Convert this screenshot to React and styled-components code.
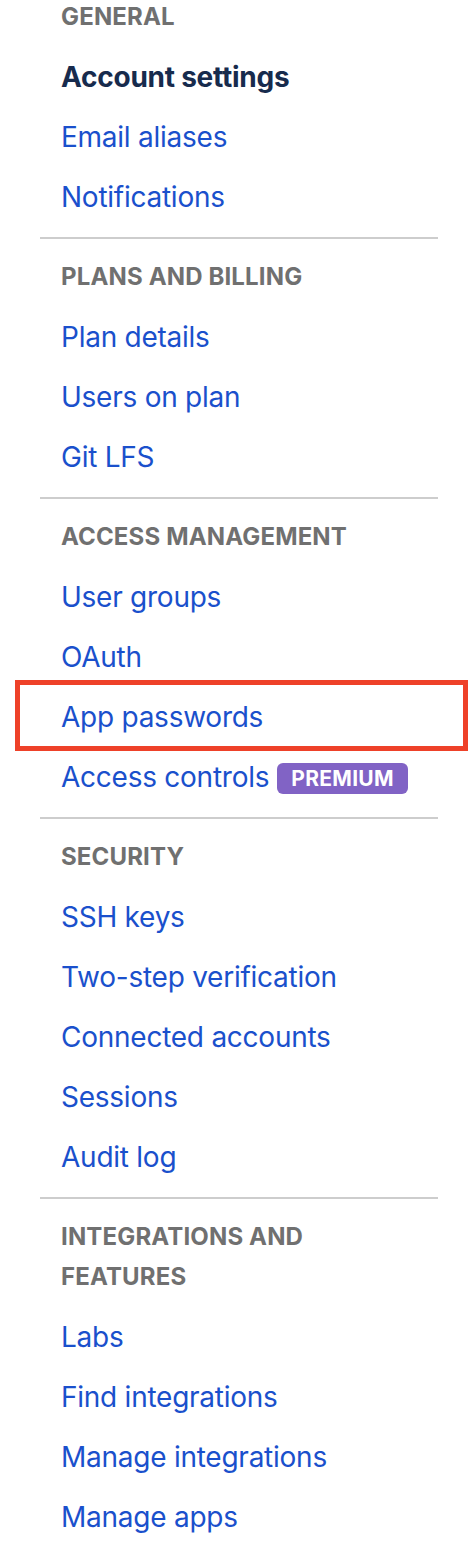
import React from 'react'
import styled, { createGlobalStyle } from 'styled-components'

const GlobalStyle = createGlobalStyle`
  html, body {
    margin: 0;
    padding: 0;
    background: #fff;
  }
  body {
    font-family: Inter, "Noto Sans", "Liberation Sans", sans-serif;
    -webkit-font-smoothing: antialiased;
  }
`

const Sidebar = styled.nav`
  width: 476px;
  padding: 0 38px 0 40px;
  box-sizing: border-box;
  overflow: hidden;
`

const Inner = styled.div`
  margin-top: -13px;
`

const Section = styled.div`
  display: flex;
  flex-direction: column;
`

const Heading = styled.h3`
  margin: 0;
  padding: 10px 0 10px 21px;
  font-size: 24px;
  line-height: 40px;
  font-weight: 700;
  letter-spacing: 0.15px;
  text-transform: uppercase;
  color: #707070;
  max-width: 290px;
`

const Item = styled.a`
  position: relative;
  display: flex;
  align-items: center;
  gap: 8px;
  height: 60px;
  padding-left: 21px;
  font-size: 28px;
  letter-spacing: -0.25px;
  text-decoration: none;
  color: ${(p) => (p.$active ? '#172b4d' : '#1a50cc')};
  font-weight: ${(p) => (p.$active ? 700 : 400)};
`

// red annotation box drawn over the row
const Highlight = styled.span`
  position: absolute;
  top: -7px;
  bottom: -4px;
  left: -25px;
  right: -30px;
  border: 5px solid #ee4129;
  pointer-events: none;
`

const Badge = styled.span`
  display: inline-flex;
  align-items: center;
  height: 31px;
  padding: 0 14px;
  border-radius: 6px;
  background: #8163c5;
  color: #fff;
  font-size: 21px;
  font-weight: 700;
  letter-spacing: 0.3px;
  margin-top: 2px;
`

const Divider = styled.hr`
  border: 0;
  height: 2px;
  background: #cdcdcd;
  margin: 10px 0 8px;
`

const sections = [
  {
    title: 'General',
    items: [
      { label: 'Account settings', active: true },
      { label: 'Email aliases' },
      { label: 'Notifications' },
    ],
  },
  {
    title: 'Plans and billing',
    items: [{ label: 'Plan details' }, { label: 'Users on plan' }, { label: 'Git LFS' }],
  },
  {
    title: 'Access management',
    items: [
      { label: 'User groups' },
      { label: 'OAuth' },
      { label: 'App passwords', highlight: true },
      { label: 'Access controls', badge: 'Premium' },
    ],
  },
  {
    title: 'Security',
    items: [
      { label: 'SSH keys' },
      { label: 'Two-step verification' },
      { label: 'Connected accounts' },
      { label: 'Sessions' },
      { label: 'Audit log' },
    ],
  },
  {
    title: 'Integrations and features',
    items: [
      { label: 'Labs' },
      { label: 'Find integrations' },
      { label: 'Manage integrations' },
      { label: 'Manage apps' },
    ],
  },
]

export default function App() {
  return (
    <>
      <GlobalStyle />
      <Sidebar>
        <Inner>
          {sections.map((s, i) => (
            <React.Fragment key={s.title}>
              {i > 0 && <Divider />}
              <Section>
                <Heading>{s.title}</Heading>
                {s.items.map((it) => (
                  <Item key={it.label} href="#" $active={it.active}>
                    {it.label}
                    {it.badge && <Badge>{it.badge.toUpperCase()}</Badge>}
                    {it.highlight && <Highlight />}
                  </Item>
                ))}
              </Section>
            </React.Fragment>
          ))}
        </Inner>
      </Sidebar>
    </>
  )
}
